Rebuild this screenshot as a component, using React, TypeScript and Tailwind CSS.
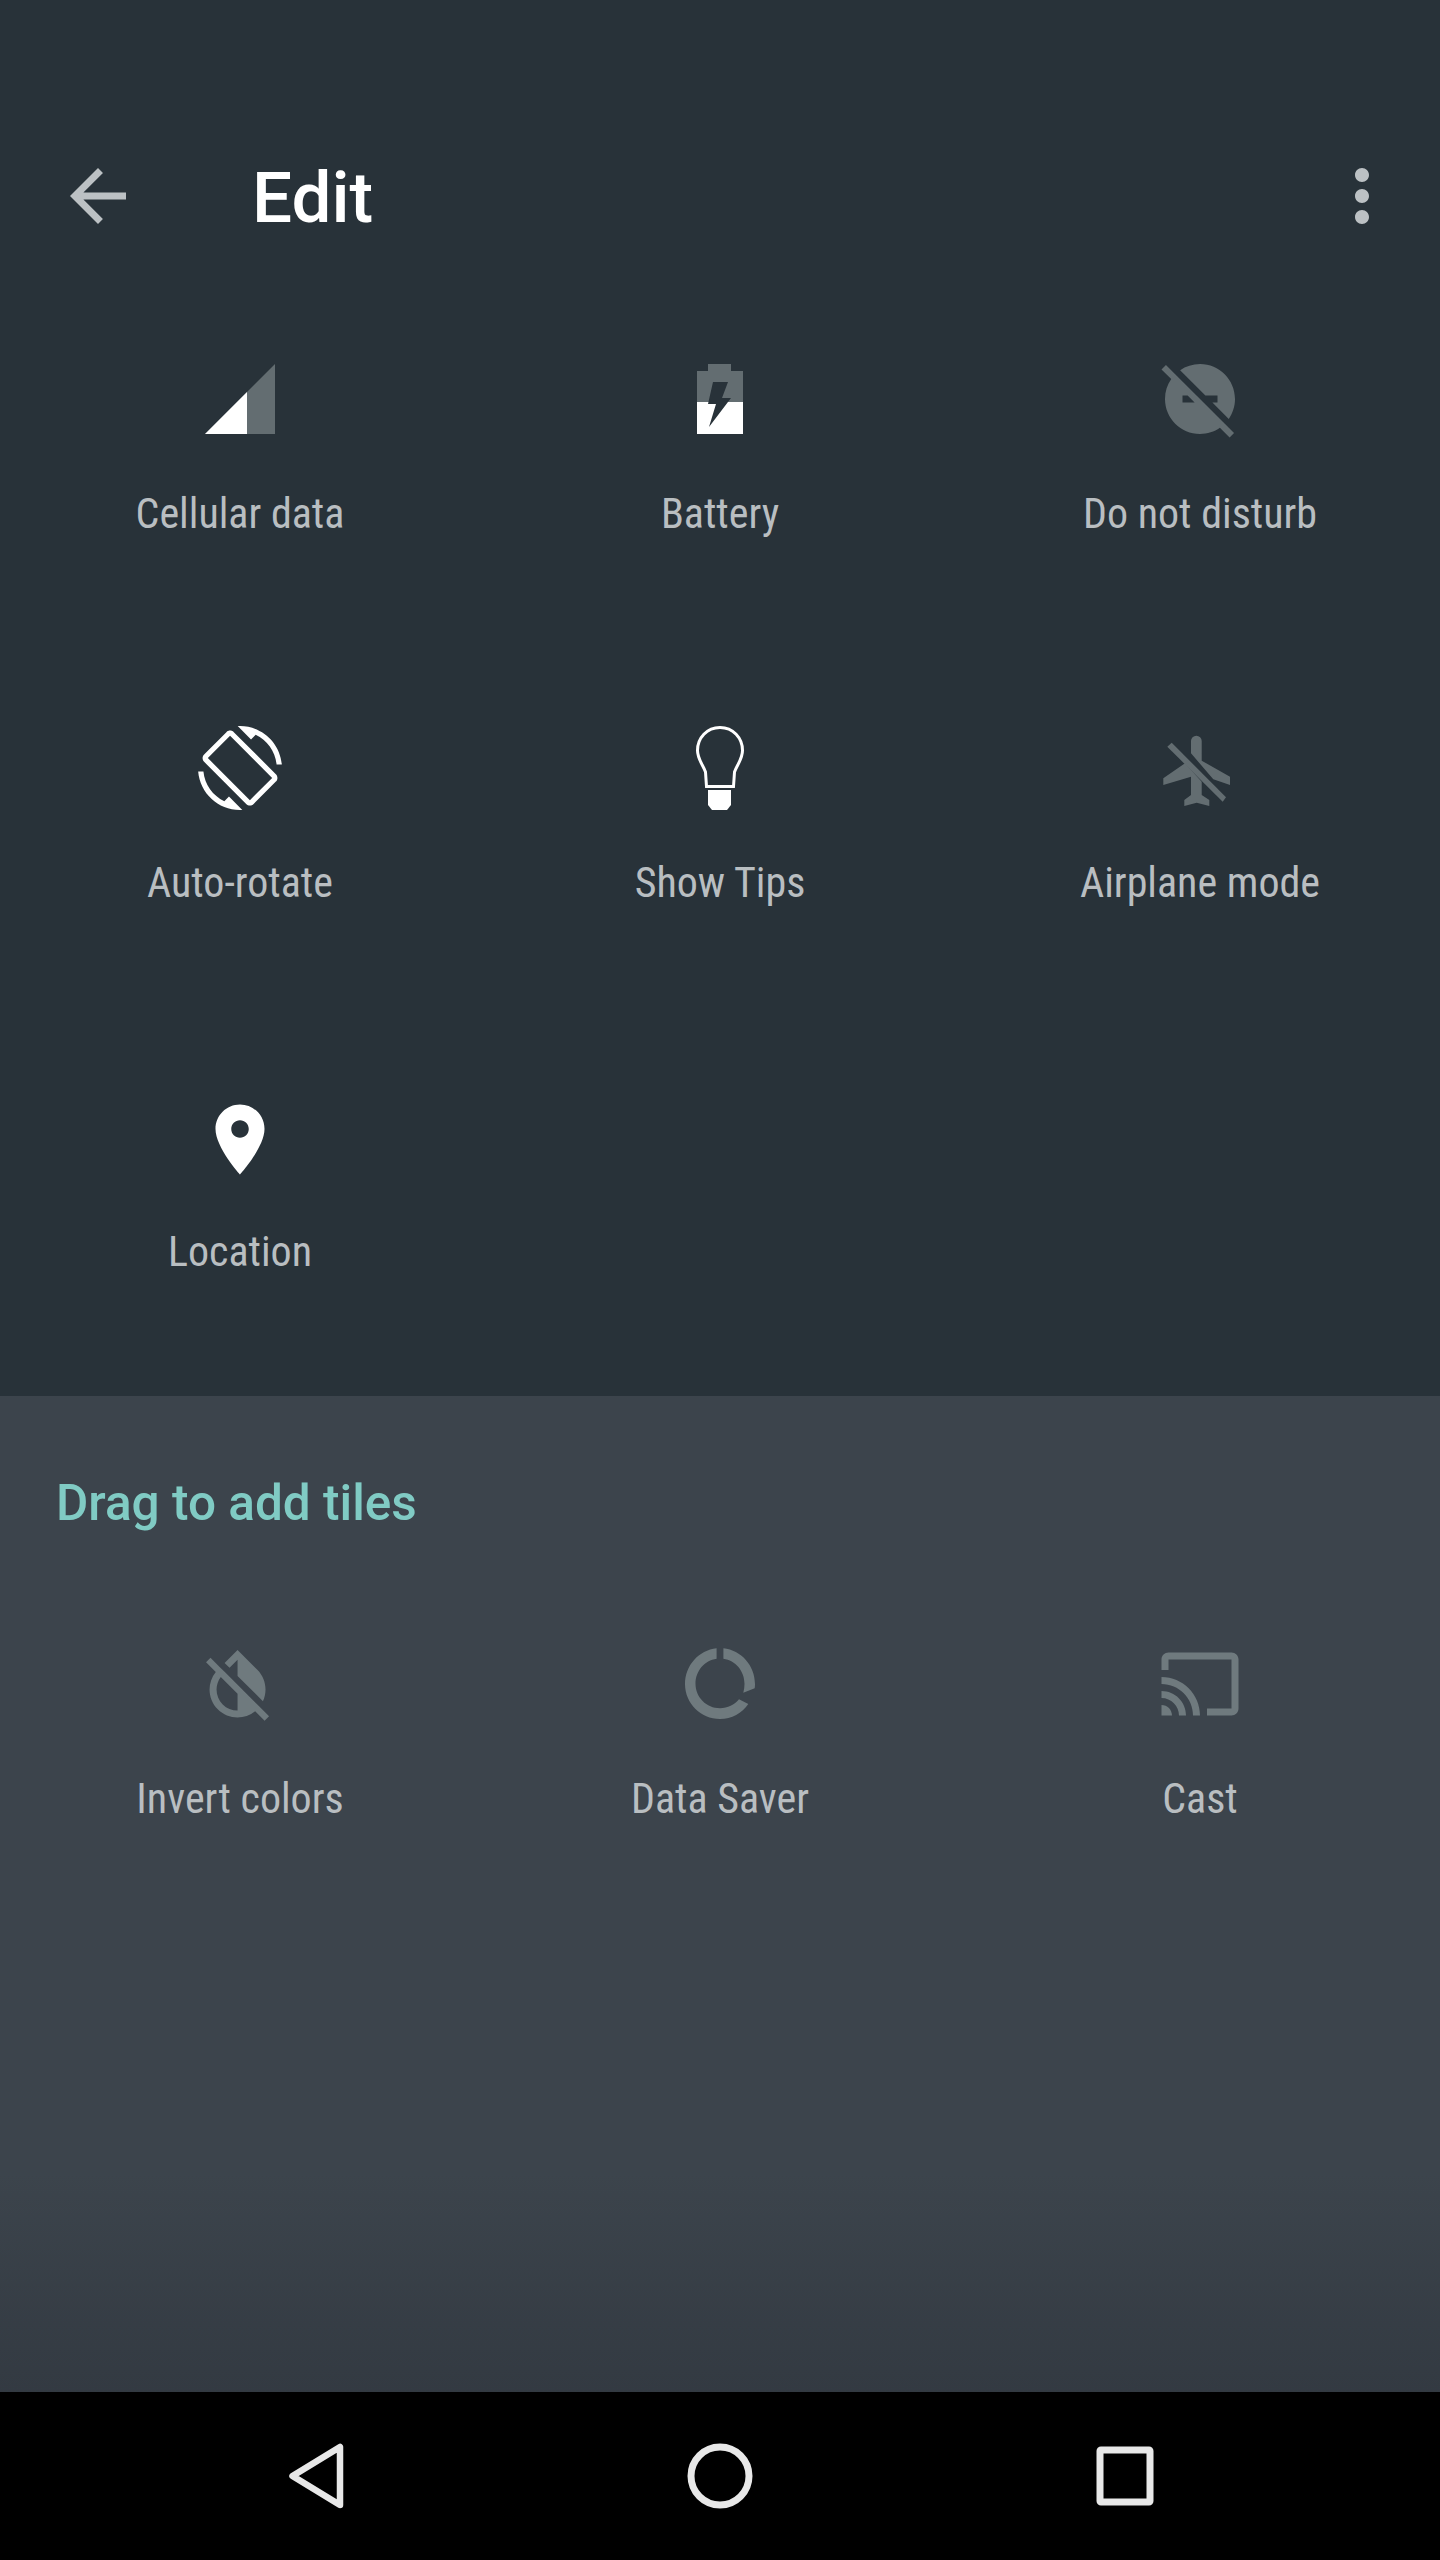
import React from "react";

const DIM = "#636d71";
const DIM_LOW = "#6f7a7e";

function Signal() {
  return (
    <svg viewBox="0 0 24 24" className="h-[84px] w-[84px]">
      <path d="M2 22h20V2z" fill={DIM} />
      <path d="M14 22V10L2 22z" fill="#fff" />
    </svg>
  );
}

function Battery() {
  return (
    <svg viewBox="0 0 84 84" className="h-[84px] w-[84px]">
      <path d="M30 7h23v7h12v31H19V14h11z" fill={DIM} />
      <path d="M19 45h46v32H19z" fill="#fff" />
      <path d="M35 25h15l-6 16h9L31 70l7-23h-8z" fill="#283239" />
    </svg>
  );
}

function DoNotDisturb() {
  return (
    <svg viewBox="0 0 24 24" className="h-[84px] w-[84px]" fill={DIM}>
      <path d="M17 11v2h-1.46l4.68 4.68C21.34 16.07 22 14.11 22 12c0-5.52-4.48-10-10-10-2.11 0-4.07.66-5.68 1.78L13.54 11H17zM2.27 2.27L1 3.54l2.78 2.78C2.66 7.93 2 9.89 2 12c0 5.52 4.48 10 10 10 2.11 0 4.07-.66 5.68-1.78L20.46 23l1.27-1.27L11 11 2.27 2.27zM7 13v-2h1.46l2 2H7z" />
    </svg>
  );
}

function Rotate() {
  return (
    <svg viewBox="0 0 24 24" className="h-[84px] w-[84px]" fill="#fff">
      <path d="M16.48 2.52c3.27 1.55 5.61 4.72 5.97 8.48h1.5C23.44 4.84 18.29 0 12 0l-.66.03 3.81 3.81 1.33-1.32zm-6.25-.77c-.59-.59-1.54-.59-2.12 0L1.75 8.11c-.59.59-.59 1.54 0 2.12l12.02 12.02c.59.59 1.54.59 2.12 0l6.36-6.36c.59-.59.59-1.54 0-2.12L10.23 1.75zm4.6 19.44L2.81 9.17l6.36-6.36 12.02 12.02-6.36 6.36zm-7.31.29C4.25 19.94 1.91 16.76 1.55 13H.05C.56 19.16 5.71 24 12 24l.66-.03-3.81-3.81-1.33 1.32z" />
    </svg>
  );
}

function Bulb() {
  return (
    <svg viewBox="0 0 84 84" className="h-[84px] w-[84px]">
      <path
        d="M42 1.5C29 1.5 19.5 12 19.5 24.5c0 8.500 5.500 14.500 8 21.500l1 14.500h27l1-14.500c2.500-7 8-13 8-21.500C64.500 12 55 1.500 42 1.500z"
        fill="none"
        stroke="#fff"
        strokeWidth="3"
      />
      <path d="M30 64h23v15l-4 5H34l-4-5z" fill="#fff" />
    </svg>
  );
}

function Airplane() {
  return (
    <svg viewBox="0 0 84 84" className="h-[84px] w-[84px]" fill={DIM}>
      <path d="M33 27.300V15a5.350 5.350 0 0 1 10.700 0v19.700L72 50.700V59l-16.700-5.700z" />
      <path d="M27 37.300L5.300 52.300V59L33 50.700V69l-6.700 5v6l12.400-3.300L51.300 80v-6l-7.600-5V55.700z" />
      <path d="M9.300 20.700l4.400-4L68 71.300l-3.300 4.400z" />
    </svg>
  );
}

function Pin() {
  return (
    <svg viewBox="0 0 24 24" className="h-[84px] w-[84px]" fill="#fff">
      <g transform="translate(0 0.7)">
        <path d="M12 2C8.130 2 5 5.130 5 9c0 5.250 7 13 7 13s7-7.750 7-13c0-3.870-3.130-7-7-7zm0 9.500c-1.380 0-2.500-1.120-2.500-2.500s1.120-2.500 2.500-2.500 2.500 1.120 2.500 2.500-1.120 2.500-2.500 2.500z" />
      </g>
    </svg>
  );
}

function Invert() {
  return (
    <svg viewBox="0 0 24 24" className="h-[84px] w-[84px]" fill={DIM_LOW}>
      <g transform="translate(-0.7 0)">
        <path d="M20.650 20.870l-2.350-2.350-6.300-6.290-3.560-3.570-1.420-1.410L4.270 4.500 3 5.770l2.780 2.780c-2.550 3.140-2.360 7.760.56 10.690C7.900 20.800 9.950 21.580 12 21.580c1.790 0 3.570-.59 5.030-1.780l2.700 2.700L21 21.230l-.35-.36zM12 19.590c-1.600 0-3.110-.62-4.240-1.760C6.620 16.690 6 15.190 6 13.590c0-1.320.43-2.570 1.210-3.600L12 14.770v4.820zM12 5.100v4.580l7.250 7.260c1.370-2.960.84-6.570-1.600-9.010L12 2.270l-3.700 3.700 1.410 1.410L12 5.100z" />
      </g>
    </svg>
  );
}

function DataSaver() {
  return (
    <svg viewBox="0 0 84 84" className="h-[84px] w-[84px]" fill={DIM_LOW}>
      <path d="M38.600 6.200v10.500C26.500 18.300 17.500 29 17.500 41.700c0 13.500 11 24.500 24.500 24.500 7.600 0 14.500-3.400 19-8.900l9.300 4.700C64 71 53.700 77 42 77 22.700 77 7 61.300 7 42 7 23.600 20.800 8 38.600 6.200zM45.400 6.200C63.200 8 77 23.600 77 42c0 1.500-.1 2.900-.3 4.300l-11.400 4.400c.8-2.800 1.200-5.900 1.200-9 0-12.700-9-23.400-21.100-25z" />
    </svg>
  );
}

function Cast() {
  return (
    <svg viewBox="0 0 24 24" className="h-[84px] w-[84px]" fill={DIM_LOW}>
      <path d="M21 3H3c-1.100 0-2 .9-2 2v3h2V5h18v14h-7v2h7c1.100 0 2-.9 2-2V5c0-1.100-.9-2-2-2zM1 18v3h3c0-1.660-1.340-3-3-3zm0-4v2c2.760 0 5 2.240 5 5h2c0-3.870-3.130-7-7-7zm0-4v2c4.970 0 9 4.030 9 9h2c0-6.080-4.930-11-11-11z" />
    </svg>
  );
}

function Tile({ icon, label }: { icon: React.ReactNode; label: string }) {
  return (
    <div className="flex h-[369px] flex-col items-center">
      {icon}
      <span className="mt-[45px] font-['Roboto_Condensed','Roboto',sans-serif] text-[42px] leading-[56px] text-[#b9bec1] [font-stretch:75%]">
        {label}
      </span>
    </div>
  );
}

export default function App() {
  return (
    <div className="flex h-[2560px] w-[1440px] flex-col font-['Roboto',sans-serif]">
      <div className="h-[1396px] bg-[#283239]">
        <div className="flex h-[357px] items-start pr-[36px] pl-[56px] pt-[154px]">
          <svg viewBox="0 0 24 24" className="h-[84px] w-[84px]" fill="#bcc1c4">
            <path d="M20 11H7.830l5.590-5.590L12 4l-8 8 8 8 1.410-1.410L7.830 13H20v-2z" />
          </svg>
          <h1 className="ml-[112px] flex-1 text-[71px] leading-[88px] font-medium text-white">Edit</h1>
          <svg viewBox="0 0 24 24" className="h-[84px] w-[84px]" fill="#bcc1c4">
            <path d="M12 8c1.100 0 2-.9 2-2s-.9-2-2-2-2 .9-2 2 .9 2 2 2zm0 2c-1.100 0-2 .9-2 2s.9 2 2 2 2-.9 2-2-.9-2-2-2zm0 6c-1.100 0-2 .9-2 2s.9 2 2 2 2-.9 2-2-.9-2-2-2z" />
          </svg>
        </div>
        <div className="grid grid-cols-3">
          <Tile icon={<Signal />} label="Cellular data" />
          <Tile icon={<Battery />} label="Battery" />
          <Tile icon={<DoNotDisturb />} label="Do not disturb" />
          <Tile icon={<Rotate />} label="Auto-rotate" />
          <Tile icon={<Bulb />} label="Show Tips" />
          <Tile icon={<Airplane />} label="Airplane mode" />
          <Tile icon={<Pin />} label="Location" />
        </div>
      </div>

      <div className="h-[996px] bg-linear-to-b from-[#3c444c] from-[78%] to-[#333a42] pt-[77px]">
        <h2 className="mb-[109px] px-[56px] text-[49.500px] leading-[60px] font-medium text-[#80cbc4]">Drag to add tiles</h2>
        <div className="grid grid-cols-3">
          <Tile icon={<Invert />} label="Invert colors" />
          <Tile icon={<DataSaver />} label="Data Saver" />
          <Tile icon={<Cast />} label="Cast" />
        </div>
      </div>

      <div className="flex h-[168px] items-center justify-between bg-black px-[273px]">
        <svg viewBox="0 0 84 84" className="h-[84px] w-[84px]" fill="none" stroke="#e8e8e8" strokeWidth="6.500" strokeLinejoin="round">
          <path d="M67 13v58L19.500 42z" />
        </svg>
        <svg viewBox="0 0 84 84" className="h-[84px] w-[84px]" fill="none" stroke="#e8e8e8" strokeWidth="7">
          <circle cx="42" cy="42" r="29" />
        </svg>
        <svg viewBox="0 0 84 84" className="h-[84px] w-[84px]" fill="none" stroke="#e8e8e8" strokeWidth="7" strokeLinejoin="round">
          <rect x="17" y="16" width="50" height="52" rx="1" />
        </svg>
      </div>
    </div>
  );
}
